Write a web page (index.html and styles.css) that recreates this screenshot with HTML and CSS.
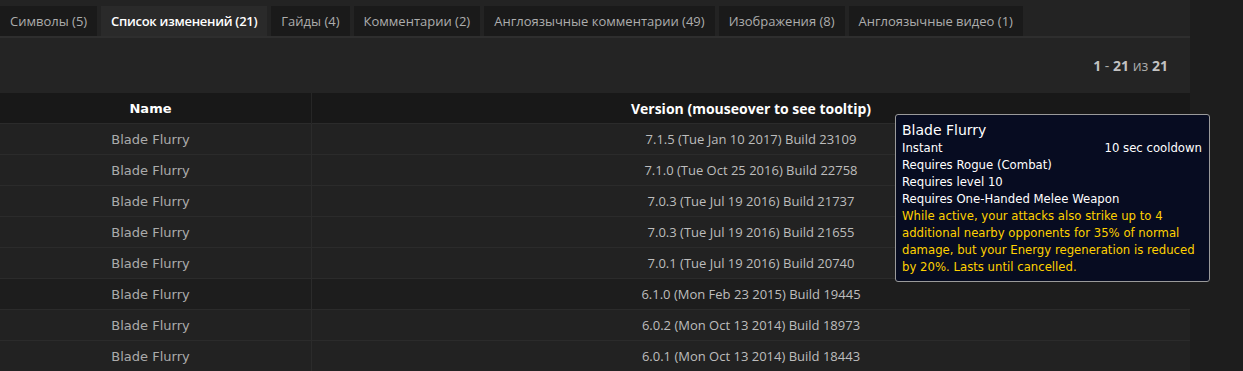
FILE: index.html
```html
<!DOCTYPE html>
<html lang="ru">
<head>
    <meta charset="UTF-8">
    <title>Blade Flurry — Список изменений</title>
    <link rel="stylesheet" href="styles.css">
</head>
<body>
    <div class="page">
        <div class="main">
            <ul class="tabs">
                <li>Символы (5)</li>
                <li class="active">Список изменений (21)</li>
                <li>Гайды (4)</li>
                <li>Комментарии (2)</li>
                <li>Англоязычные комментарии (49)</li>
                <li>Изображения (8)</li>
                <li>Англоязычные видео (1)</li>
            </ul>
            <div class="panel">
                <div class="nav">
                    <b>1</b> - <b>21</b> из <b>21</b>
                </div>
                <table class="listview">
                    <thead>
                        <tr>
                            <th class="col-name">Name</th>
                            <th>Version (mouseover to see tooltip)</th>
                        </tr>
                    </thead>
                    <tbody>
                        <tr><td class="name">Blade Flurry</td><td>7.1.5 (Tue Jan 10 2017) Build 23109</td></tr>
                        <tr><td class="name">Blade Flurry</td><td>7.1.0 (Tue Oct 25 2016) Build 22758</td></tr>
                        <tr><td class="name">Blade Flurry</td><td>7.0.3 (Tue Jul 19 2016) Build 21737</td></tr>
                        <tr><td class="name">Blade Flurry</td><td>7.0.3 (Tue Jul 19 2016) Build 21655</td></tr>
                        <tr><td class="name">Blade Flurry</td><td>7.0.1 (Tue Jul 19 2016) Build 20740</td></tr>
                        <tr class="dark"><td class="name">Blade Flurry</td><td>6.1.0 (Mon Feb 23 2015) Build 19445</td></tr>
                        <tr><td class="name">Blade Flurry</td><td>6.0.2 (Mon Oct 13 2014) Build 18973</td></tr>
                        <tr><td class="name">Blade Flurry</td><td>6.0.1 (Mon Oct 13 2014) Build 18443</td></tr>
                    </tbody>
                </table>
            </div>
        </div>
        <div class="side"></div>
    </div>

    <div class="tooltip">
        <div class="tt-title">Blade Flurry</div>
        <div class="tt-row"><span>Instant</span><span>10 sec cooldown</span></div>
        <div>Requires Rogue (Combat)</div>
        <div>Requires level 10</div>
        <div>Requires One-Handed Melee Weapon</div>
        <div class="tt-desc">While active, your attacks also strike up to 4 additional nearby opponents for 35% of normal damage, but your Energy regeneration is reduced by 20%. Lasts until cancelled.</div>
    </div>
</body>
</html>
```

FILE: styles.css
```css
body {
    margin: 0;
    background-color: #1d1d1d;
    font-family: "Open Sans", "Liberation Sans", sans-serif;
    font-size: 13px;
    color: #bbb;
    overflow: hidden;
}
.page {
    display: flex;
    height: 371px;
}
.main {
    width: 1190px;
    background-color: #232323;
    padding-top: 6px;
}
.side {
    flex: 1;
    background-color: #1d1d1d;
}
.tabs {
    list-style: none;
    margin: 0;
    padding: 0;
    display: flex;
    gap: 4px;
    border-bottom: 2px solid #2e2e2e;
}
.tabs li {
    height: 30px;
    line-height: 30px;
    padding: 0 10px;
    background-color: #1a1a1a;
    color: #adadad;
    white-space: nowrap;
}
.tabs li:first-child {
    width: 77px;
}
.tabs li.active {
    background-color: #2a2a2a;
    color: #fff;
    font-weight: 600;
    letter-spacing: -0.28px;
}
.panel {
    background-color: #242424;
}
.nav {
    height: 55px;
    line-height: 56px;
    text-align: right;
    padding-right: 22px;
    font-size: 14px;
    color: #aaa;
}
.nav b {
    color: #c2c2c2;
    font-weight: 700;
}
.listview {
    width: 1200px;
    margin-left: -10px;
    border-collapse: collapse;
}
.listview th {
    height: 30px;
    padding: 0;
    background-color: #181818;
    color: #fff;
    font-size: 14px;
    font-weight: 700;
}
.listview th.col-name {
    width: 321px;
    font-family: "DejaVu Sans", Verdana, sans-serif;
    font-size: 13px;
    border-right: 1px solid #262626;
}
.listview td {
    height: 30px;
    padding: 0;
    text-align: center;
    background-color: #222;
    border-top: 1px solid #2b2b2b;
    color: #bdbdbd;
}
.listview td.name {
    font-family: "DejaVu Sans", Verdana, sans-serif;
    font-size: 13px;
    color: #ababab;
    border-right: 1px solid #2b2b2b;
}
.listview tr.dark td {
    background-color: #1d1d1d;
}
.tooltip {
    position: absolute;
    left: 895px;
    top: 114px;
    width: 300px;
    padding: 6px 7px 5px 6px;
    background-color: #070c21;
    border: 1px solid #9a9a9a;
    border-radius: 3px;
    font-family: "DejaVu Sans", Verdana, sans-serif;
    font-size: 11.7px;
    line-height: 17px;
    color: #fff;
}
.tt-title {
    font-size: 14px;
    line-height: 19px;
}
.tt-row {
    display: flex;
    justify-content: space-between;
}
.tt-desc {
    color: #ffd100;
}
```
